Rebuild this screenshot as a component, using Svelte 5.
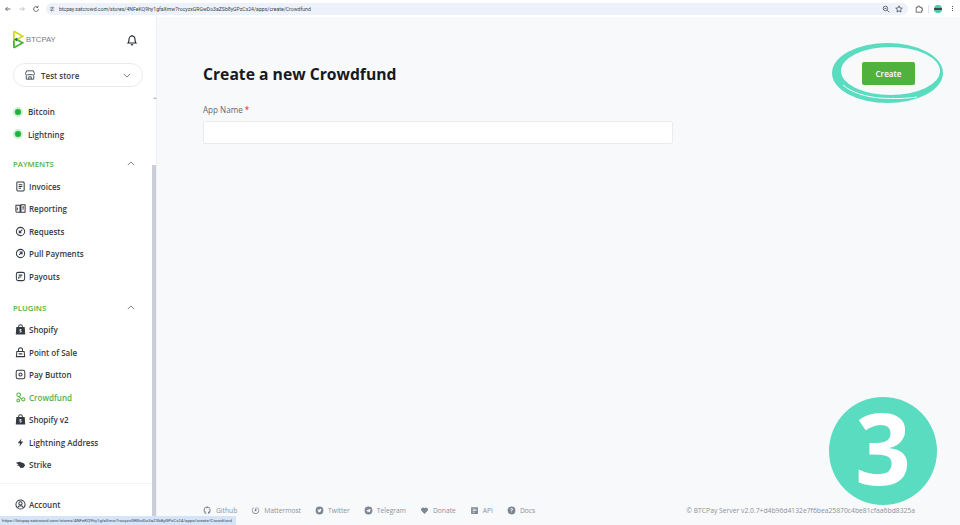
<script lang="ts">
  type NavItem = { label: string; icon: string; active?: boolean };

  const payments: NavItem[] = [
    { label: "Invoices", icon: "invoice" },
    { label: "Reporting", icon: "report" },
    { label: "Requests", icon: "request" },
    { label: "Pull Payments", icon: "pull" },
    { label: "Payouts", icon: "payout" },
  ];

  const plugins: NavItem[] = [
    { label: "Shopify", icon: "shopify" },
    { label: "Point of Sale", icon: "pos" },
    { label: "Pay Button", icon: "button" },
    { label: "Crowdfund", icon: "crowd", active: true },
    { label: "Shopify v2", icon: "shopify" },
    { label: "Lightning Address", icon: "bolt" },
    { label: "Strike", icon: "strike" },
  ];

  const footerLinks = [
    { label: "Github", icon: "github" },
    { label: "Mattermost", icon: "matter" },
    { label: "Twitter", icon: "twitter" },
    { label: "Telegram", icon: "telegram" },
    { label: "Donate", icon: "heart" },
    { label: "API", icon: "api" },
    { label: "Docs", icon: "docs" },
  ];

  const url =
    "btcpay.satcrowd.com/stores/4NFeKQ9hy1gfaXmw7rocyzxGRGwDo3aZSb8yGPzCx24/apps/create/Crowdfund";
</script>

{#snippet navIcon(name: string)}
  <svg class="nav-icon" viewBox="0 0 12 12" fill="none" stroke="currentColor" stroke-width="1.1">
    {#if name === "invoice"}
      <rect x="2" y="1.2" width="8" height="9.6" rx="1" />
      <path d="M4 4h4M4 6h4M4 8h2.5" />
    {:else if name === "report"}
      <path d="M1 2.5h4.5v7.5H2a1 1 0 0 1-1-1zM6.500 2h4.500v8H6.500z" />
      <path d="M8 4.500h1.800M8 6.500h1.800M2.500 5v3" />
    {:else if name === "request"}
      <circle cx="6" cy="6" r="4.500" />
      <path d="M8 4 4.800 7.200M4.600 5v2.400H7" />
    {:else if name === "pull"}
      <circle cx="6" cy="6" r="4.500" />
      <path d="M4.500 7.500 7.500 4.500M5 4.300h2.700V7" />
    {:else if name === "payout"}
      <rect x="1.500" y="1.500" width="9" height="9" rx="2" />
      <path d="M4 4.500h4M4 6.500h3M4 6.500v2" />
    {:else if name === "shopify"}
      <path d="M2 3.800h8l.6 7H1.400z" fill="currentColor" />
      <path d="M4 4V2.800a2 2 0 0 1 4 0V4" />
      <path d="M7 6H5.300v1.400h1.400v1.400H5" stroke="#fff" stroke-width=".9" />
    {:else if name === "pos"}
      <path d="M2 5h8l.5 5.500h-9z" />
      <path d="M3.800 5V3a2.200 2.200 0 0 1 4.400 0v2M4 7.500h4" />
    {:else if name === "button"}
      <rect x="1.300" y="1.300" width="9.400" height="9.400" rx="2" />
      <circle cx="6" cy="6" r="1.700" />
    {:else if name === "crowd"}
      <circle cx="4" cy="3" r="2" />
      <circle cx="3.500" cy="9.200" r="1.500" />
      <circle cx="9" cy="8" r="1.800" />
      <path d="M4.500 5 6.800 7.500" />
    {:else if name === "bolt"}
      <path d="M7 1.500 3 6.800h2.600L4.800 10.500 9 5H6.300z" fill="currentColor" stroke="none" />
    {:else if name === "strike"}
      <path d="M1 4.200 5 3l5 2 1 2-2 2.500-3 .2-1.500-2L1.500 6.500l2.500-.3z" fill="currentColor" stroke="none" />
    {:else}
      <circle cx="6" cy="6" r="5" />
      <circle cx="6" cy="4.800" r="1.800" />
      <path d="M2.800 9.500c.6-1.600 1.800-2.200 3.200-2.200s2.600.6 3.200 2.200" />
    {/if}
  </svg>
{/snippet}

{#snippet footIcon(name: string)}
  <svg class="foot-icon" viewBox="0 0 12 12" fill="#7d8794">
    {#if name === "github"}
      <path d="M6 .8a5.200 5.200 0 0 0-1.700 10.100v-1.500c-1.400.3-1.800-.7-1.800-.7-.3-.6-.7-.8-.7-.8-.5-.3 0-.3 0-.3.500 0 .9.600.9.600.5.800 1.200.6 1.600.4 0-.3.200-.6.300-.7-1.200-.1-2.400-.6-2.400-2.600 0-.6.200-1 .5-1.400 0-.1-.2-.7.100-1.400 0 0 .4-.1 1.400.5a5 5 0 0 1 2.600 0c1-.6 1.400-.5 1.400-.5.300.7.100 1.300.1 1.400.3.400.5.800.5 1.400 0 2-1.200 2.500-2.400 2.600.2.200.4.500.4 1v1.900A5.200 5.200 0 0 0 6 .8z" />
    {:else if name === "matter"}
      <path d="M8.500 1.500A4.900 4.900 0 1 1 3.500 1.500l.2 1.100a3.800 3.800 0 1 0 4.600 0z" />
      <path d="M7 .9 7.300 5.800a1.300 1.300 0 0 1-2.600.1z" />
    {:else if name === "twitter"}
      <path fill-rule="evenodd" d="M6 .8a5.200 5.200 0 1 1 0 10.400A5.200 5.200 0 0 1 6 .8zM8.700 4l-.7.100c-.6-.7-2.200-.4-2 1-1 0-1.800-.5-2.400-1.200-.3.600-.1 1.200.4 1.600l-.5-.1c0 .6.400 1 1 1.200h-.5c.2.500.6.700 1.100.8-.5.400-1.100.500-1.700.500 2.700 1.400 5-.4 4.800-3.100z" />
    {:else if name === "telegram"}
      <path fill-rule="evenodd" d="M6 .8a5.200 5.200 0 1 1 0 10.400A5.200 5.200 0 0 1 6 .8zM8.800 3.500 2.700 5.900l1.700.6.700 2 1-1.200 1.700 1.200z" />
    {:else if name === "heart"}
      <path d="M6 10.500 1.600 6A2.700 2.700 0 0 1 6 3a2.700 2.700 0 0 1 4.400 3z" />
    {:else if name === "api"}
      <path fill-rule="evenodd" d="M1.500 1.500h9v9h-9zM3.500 3.500v1h5v-1zM3.500 5.500v1h5v-1zM3.500 7.500v1h3v-1z" />
    {:else}
      <path fill-rule="evenodd" d="M6 .8a5.200 5.200 0 1 1 0 10.400A5.200 5.200 0 0 1 6 .8zM4.300 4.600h1c0-.9 1.400-.9 1.400 0 0 .7-1.200.8-1.200 2h1c0-.9 1.300-1 1.300-2.100 0-2.100-3.500-2.100-3.500.1zM5.500 7.300v1.100h1V7.300z" />
    {/if}
  </svg>
{/snippet}

{#snippet navRow(item: NavItem)}
  <li class="nav-row" class:active={item.active}>
    {@render navIcon(item.icon)}
    <span>{item.label}</span>
  </li>
{/snippet}

<div class="window">
  <header class="toolbar">
    <div class="nav-btns">
      <svg viewBox="0 0 10 10" class="tb-icon"><path d="M8 5H2M4.500 2.500 2 5l2.500 2.500" /></svg>
      <svg viewBox="0 0 10 10" class="tb-icon faint"><path d="M2 5h6M5.500 2.500 8 5 5.500 7.500" /></svg>
      <svg viewBox="0 0 10 10" class="tb-icon"><path d="M8 5a3 3 0 1 1-1-2.200M7.500 1v2H5.500" /></svg>
    </div>
    <div class="omnibox">
      <svg viewBox="0 0 10 10" class="tb-icon small"><path d="M1.500 3h3M7 3h1.500M1.500 7H3M5.500 7h3" /><circle cx="5.700" cy="3" r="1.100" /><circle cx="4.200" cy="7" r="1.100" /></svg>
      <span class="url">{url}</span>
      <span class="omni-right">
        <svg viewBox="0 0 10 10" class="tb-icon"><circle cx="4.300" cy="4.300" r="2.800" /><path d="m6.500 6.500 2.500 2.500M3 4.300h2.600" /></svg>
        <svg viewBox="0 0 10 10" class="tb-icon"><path d="m5 1 1.200 2.700 2.900.3-2.200 1.900.6 2.900L5 7.300 2.500 8.800l.6-2.900L.9 4l2.900-.3z" /></svg>
      </span>
    </div>
    <div class="tb-right">
      <svg viewBox="0 0 10 10" class="tb-icon"><path d="M1.500 3h2V1.500h2.500V3h2.500v2H10v1.500H8.500V9h-7z" /></svg>
      <span class="tb-sep"></span>
      <span class="avatar"></span>
      <span class="kebab"><i></i><i></i><i></i></span>
    </div>
  </header>

  <div class="body">
    <aside class="sidebar">
      <div class="brand">
        <svg class="logo" viewBox="0 0 12 20">
          <path d="M1 1 1 19" stroke="#cedc21" stroke-width="2" fill="none" />
          <path d="M1 11 1 19" stroke="#51b13e" stroke-width="2" fill="none" />
          <path d="M1 1 10.500 6.500 4 10" stroke="#cedc21" stroke-width="2" fill="none" />
          <path d="M1 19 10.500 13.500 4 10" stroke="#51b13e" stroke-width="2" fill="none" />
          <path d="M1 10 4.500 7.800v4.400z" fill="#1e7a44" />
        </svg>
        <span class="brand-name">BTCPAY</span>
        <svg class="bell" viewBox="0 0 12 12" fill="none" stroke="#1f2328" stroke-width="1.100">
          <path d="M2 9c.8-.9 1-1.600 1-3.500C3 3.500 4.300 2 6 2s3 1.500 3 3.500C9 7.400 9.200 8.100 10 9z" />
          <path d="M5 10.300a1.100 1.100 0 0 0 2 0M6 1v1" />
        </svg>
      </div>

      <div class="store-select">
        <svg class="store-icon" viewBox="0 0 12 12" fill="none" stroke="#3f4650" stroke-width="1.100">
          <path d="M2 1h8l1.400 3.400a1.500 1.500 0 0 1-2.800.9 2 2 0 0 1-2.600 0 2 2 0 0 1-2.600 0A1.500 1.500 0 0 1 .6 4.400zM1.500 6.500V11h9V6.500" />
          <path d="M4.500 11V8.200h3V11" />
        </svg>
        <span class="store-name">Test store</span>
        <svg class="chev-down" viewBox="0 0 10 6" fill="none" stroke="#5e6670" stroke-width="1"><path d="m1 1 4 4 4-4" /></svg>
      </div>

      <div class="scroll-up"></div>

      <nav class="nav">
        <ul class="wallets">
          <li class="nav-row"><span class="status-dot"></span><span>Bitcoin</span></li>
          <li class="nav-row"><span class="status-dot"></span><span>Lightning</span></li>
        </ul>

        <div class="section-head">
          <span>PAYMENTS</span>
          <svg viewBox="0 0 10 6" fill="none" stroke="#5e6670" stroke-width="1"><path d="m1 5 4-4 4 4" /></svg>
        </div>
        <ul>
          {#each payments as item (item.label)}
            {@render navRow(item)}
          {/each}
        </ul>

        <div class="section-head plugins-head">
          <span>PLUGINS</span>
          <svg viewBox="0 0 10 6" fill="none" stroke="#5e6670" stroke-width="1"><path d="m1 5 4-4 4 4" /></svg>
        </div>
        <ul>
          {#each plugins as item, i (item.label + i)}
            {@render navRow(item)}
          {/each}
        </ul>
      </nav>

      <div class="account">
        <div class="nav-row">
          {@render navIcon("account")}
          <span>Account</span>
        </div>
      </div>

      <div class="scrollbar"></div>
    </aside>

    <main class="main">
      <div class="head">
        <h1>Create a new Crowdfund</h1>
        <button class="create" type="button">Create</button>
      </div>

      <label class="field-label" for="app-name">App Name <span class="req">*</span></label>
      <input id="app-name" class="field" type="text" />

      <footer class="footer">
        <div class="links">
          {#each footerLinks as link (link.label)}
            <span class="link">
              {@render footIcon(link.icon)}
              {link.label}
            </span>
          {/each}
        </div>
        <span class="version">© BTCPay Server v2.0.7+d4b96d4132e7f6bea25870c4be81cfaa6bd8325a</span>
      </footer>
    </main>
  </div>

  <svg class="ring" viewBox="0 0 111 60" fill="none">
    <path
      fill="#5adcc0"
      fill-rule="evenodd"
      d="M0 30A55.500 30 0 0 1 111 30A55.500 30 0 0 1 0 30ZM9 28A49.500 24 0 0 0 108 28A49.500 24 0 0 0 9 28Z"
    />
    <path d="M11 42C20 50 35 54 48 55C62 56 75 55.500 85 54" stroke="#f8f9fb" stroke-width="1" />
  </svg>

  <div class="step">3</div>

  <div class="status-url">https://btcpay.satcrowd.com/stores/4NFeKQ9hy1gfaXmw7rocyzxGRGwDo3aZSb8yGPzCx24/apps/create/Crowdfund</div>
</div>

<style>
  :global(body) {
    margin: 0;
    background: #f8f9fb;
  }

  .window {
    position: relative;
    width: 960px;
    height: 525px;
    overflow: hidden;
    display: flex;
    flex-direction: column;
    font-family: "Open Sans", "Liberation Sans", sans-serif;
    color: #1f2328;
  }

  .toolbar {
    height: 17px;
    flex: none;
    display: flex;
    align-items: center;
    background: #fff;
    padding-left: 4px;
    box-sizing: border-box;
  }

  .nav-btns {
    display: flex;
    gap: 6px;
    width: 42px;
    flex: none;
  }

  .tb-icon {
    width: 8px;
    height: 8px;
    fill: none;
    stroke: #474b50;
    stroke-width: 1;
    flex: none;
  }

  .tb-icon.small {
    width: 6px;
    height: 6px;
  }

  .tb-icon.faint {
    stroke: #b4b7bb;
  }

  .omnibox {
    flex: none;
    width: 862px;
    height: 12px;
    background: #edf2fa;
    border-radius: 6px;
    display: flex;
    align-items: center;
    padding: 0 5px 0 3px;
    box-sizing: border-box;
  }

  .url {
    font-family: "Roboto", "Liberation Sans", sans-serif;
    font-size: 5.140px;
    color: #3a3f45;
    margin-left: 4px;
    white-space: nowrap;
  }

  .omni-right {
    margin-left: auto;
    display: flex;
    gap: 5px;
  }

  .tb-right {
    display: flex;
    align-items: center;
    margin-left: 7px;
  }

  .tb-sep {
    width: 1px;
    height: 8px;
    background: #dfe3ea;
    margin-left: 5px;
  }

  .avatar {
    width: 8px;
    height: 8px;
    border-radius: 50%;
    margin-left: 5px;
    background: linear-gradient(#4cc9ad 0 35%, #444 35% 65%, #4cc9ad 65%);
  }

  .kebab {
    display: flex;
    flex-direction: column;
    gap: 1px;
    margin-left: 10px;
  }

  .kebab i {
    width: 1px;
    height: 1px;
    background: #555;
  }

  .body {
    flex: 1;
    min-height: 0;
    display: flex;
  }

  .sidebar {
    position: relative;
    width: 157px;
    flex: none;
    background: #fff;
    border-right: 1px solid #eef0f3;
    box-sizing: border-box;
    padding: 0 13px;
    display: flex;
    flex-direction: column;
  }

  .brand {
    height: 45px;
    display: flex;
    align-items: center;
    box-sizing: border-box;
  }

  .logo {
    width: 11px;
    height: 19px;
  }

  .brand-name {
    font-family: "Liberation Sans", sans-serif;
    font-size: 7.700px;
    color: #75797e;
    margin-left: 2px;
  }

  .bell {
    width: 12px;
    height: 12px;
    margin-left: auto;
    margin-right: 5px;
  }

  .store-select {
    width: 130px;
    height: 24px;
    box-sizing: border-box;
    border: 1px solid #e9ebef;
    border-radius: 12px;
    display: flex;
    align-items: center;
    padding: 0 11px 0 11px;
    margin-top: 1px;
  }

  .store-icon {
    width: 10px;
    height: 10px;
  }

  .store-name {
    font-size: 8px;
    font-weight: 600;
    color: #3b4149;
    margin-left: 6px;
  }

  .chev-down {
    width: 8px;
    height: 5px;
    margin-left: auto;
  }

  .scroll-up {
    position: absolute;
    left: 152.500px;
    top: 80px;
    width: 0;
    height: 0;
    border-left: 2px solid transparent;
    border-right: 2px solid transparent;
    border-bottom: 2px solid #b9bec6;
  }

  .nav {
    margin-top: 13.600px;
    flex: 1;
  }

  ul {
    list-style: none;
    margin: 0;
    padding: 0;
  }

  .nav-row {
    height: 22.450px;
    display: flex;
    align-items: center;
    font-size: 8px;
    font-weight: 600;
    color: #343a42;
    list-style: none;
    white-space: nowrap;
  }

  .nav-row.active {
    color: #51b13e;
  }

  .nav-icon {
    width: 11px;
    height: 11px;
    flex: none;
    margin-left: 2px;
    margin-right: 3px;
  }

  .status-dot {
    width: 6px;
    height: 6px;
    border-radius: 50%;
    background: #1cb33e;
    border: 2.300px solid #cdeed3;
    margin-right: 5px;
    margin-left: 0;
    flex: none;
  }

  .section-head {
    display: flex;
    align-items: center;
    justify-content: space-between;
    height: 20px;
    margin-top: 8.500px;
    font-size: 7.800px;
    font-weight: 600;
    color: #51b13e;
    padding-right: 8px;
  }

  .plugins-head {
    margin-top: 10.300px;
  }

  .section-head svg {
    width: 8px;
    height: 5px;
  }

  .section-head + ul {
    margin-top: 1.100px;
  }

  .account {
    border-top: 1px solid #f3f4f6;
    height: 42px;
    margin: 0 -13px;
    padding: 9px 13px 0;
    box-sizing: border-box;
    flex: none;
  }

  .scrollbar {
    position: absolute;
    left: 152px;
    top: 148px;
    bottom: 9px;
    width: 4px;
    background: #c9ced8;
  }

  .main {
    flex: 1;
    min-width: 0;
    display: flex;
    flex-direction: column;
    padding: 45px 45px 0 46px;
    box-sizing: border-box;
    background: #f8f9fb;
  }

  .head {
    display: flex;
    align-items: center;
    justify-content: space-between;
    height: 24px;
  }

  h1 {
    margin: 0;
    font-size: 15.700px;
    font-weight: 700;
    color: #16191d;
  }

  .create {
    width: 53px;
    height: 23px;
    margin-top: -1px;
    border: none;
    border-radius: 2px;
    background: #51b13e;
    color: #fff;
    font-family: inherit;
    font-size: 8.200px;
    font-weight: 600;
    padding: 0;
  }

  .field-label {
    margin-top: 18px;
    font-size: 8.100px;
    color: #5e6670;
    line-height: 12px;
  }

  .req {
    color: #e02020;
  }

  .field {
    display: block;
    width: 470px;
    height: 23px;
    margin-top: 5px;
    padding: 0;
    box-sizing: border-box;
    background: #fff;
    border: 1px solid #e9ebef;
    border-radius: 2px;
  }

  .footer {
    margin-top: auto;
    height: 24px;
    padding-bottom: 6px;
    box-sizing: border-box;
    display: flex;
    align-items: center;
    justify-content: space-between;
    font-size: 6.700px;
    color: #8a929c;
  }

  .links {
    display: flex;
    gap: 14px;
  }

  .link {
    display: flex;
    align-items: center;
    gap: 4px;
  }

  .foot-icon {
    width: 9px;
    height: 9px;
    flex: none;
  }

  .version {
    white-space: nowrap;
    font-size: 6.770px;
  }

  .ring {
    position: absolute;
    left: 832px;
    top: 43px;
    width: 111px;
    height: 60px;
  }

  .step {
    position: absolute;
    left: 829px;
    top: 397px;
    width: 108px;
    height: 108px;
    border-radius: 50%;
    background: #5adcc0;
    color: #fff;
    font-family: "Open Sans", sans-serif;
    font-weight: 700;
    font-size: 98px;
    line-height: 100px;
    text-align: center;
  }

  .status-url {
    position: absolute;
    left: 0;
    bottom: 0;
    width: 236px;
    height: 9px;
    background: #d6e4f7;
    color: #3a4656;
    font-family: "Roboto", "Liberation Sans", sans-serif;
    font-size: 4.400px;
    line-height: 9px;
    white-space: nowrap;
    overflow: hidden;
    padding-left: 2px;
    box-sizing: border-box;
  }
</style>
